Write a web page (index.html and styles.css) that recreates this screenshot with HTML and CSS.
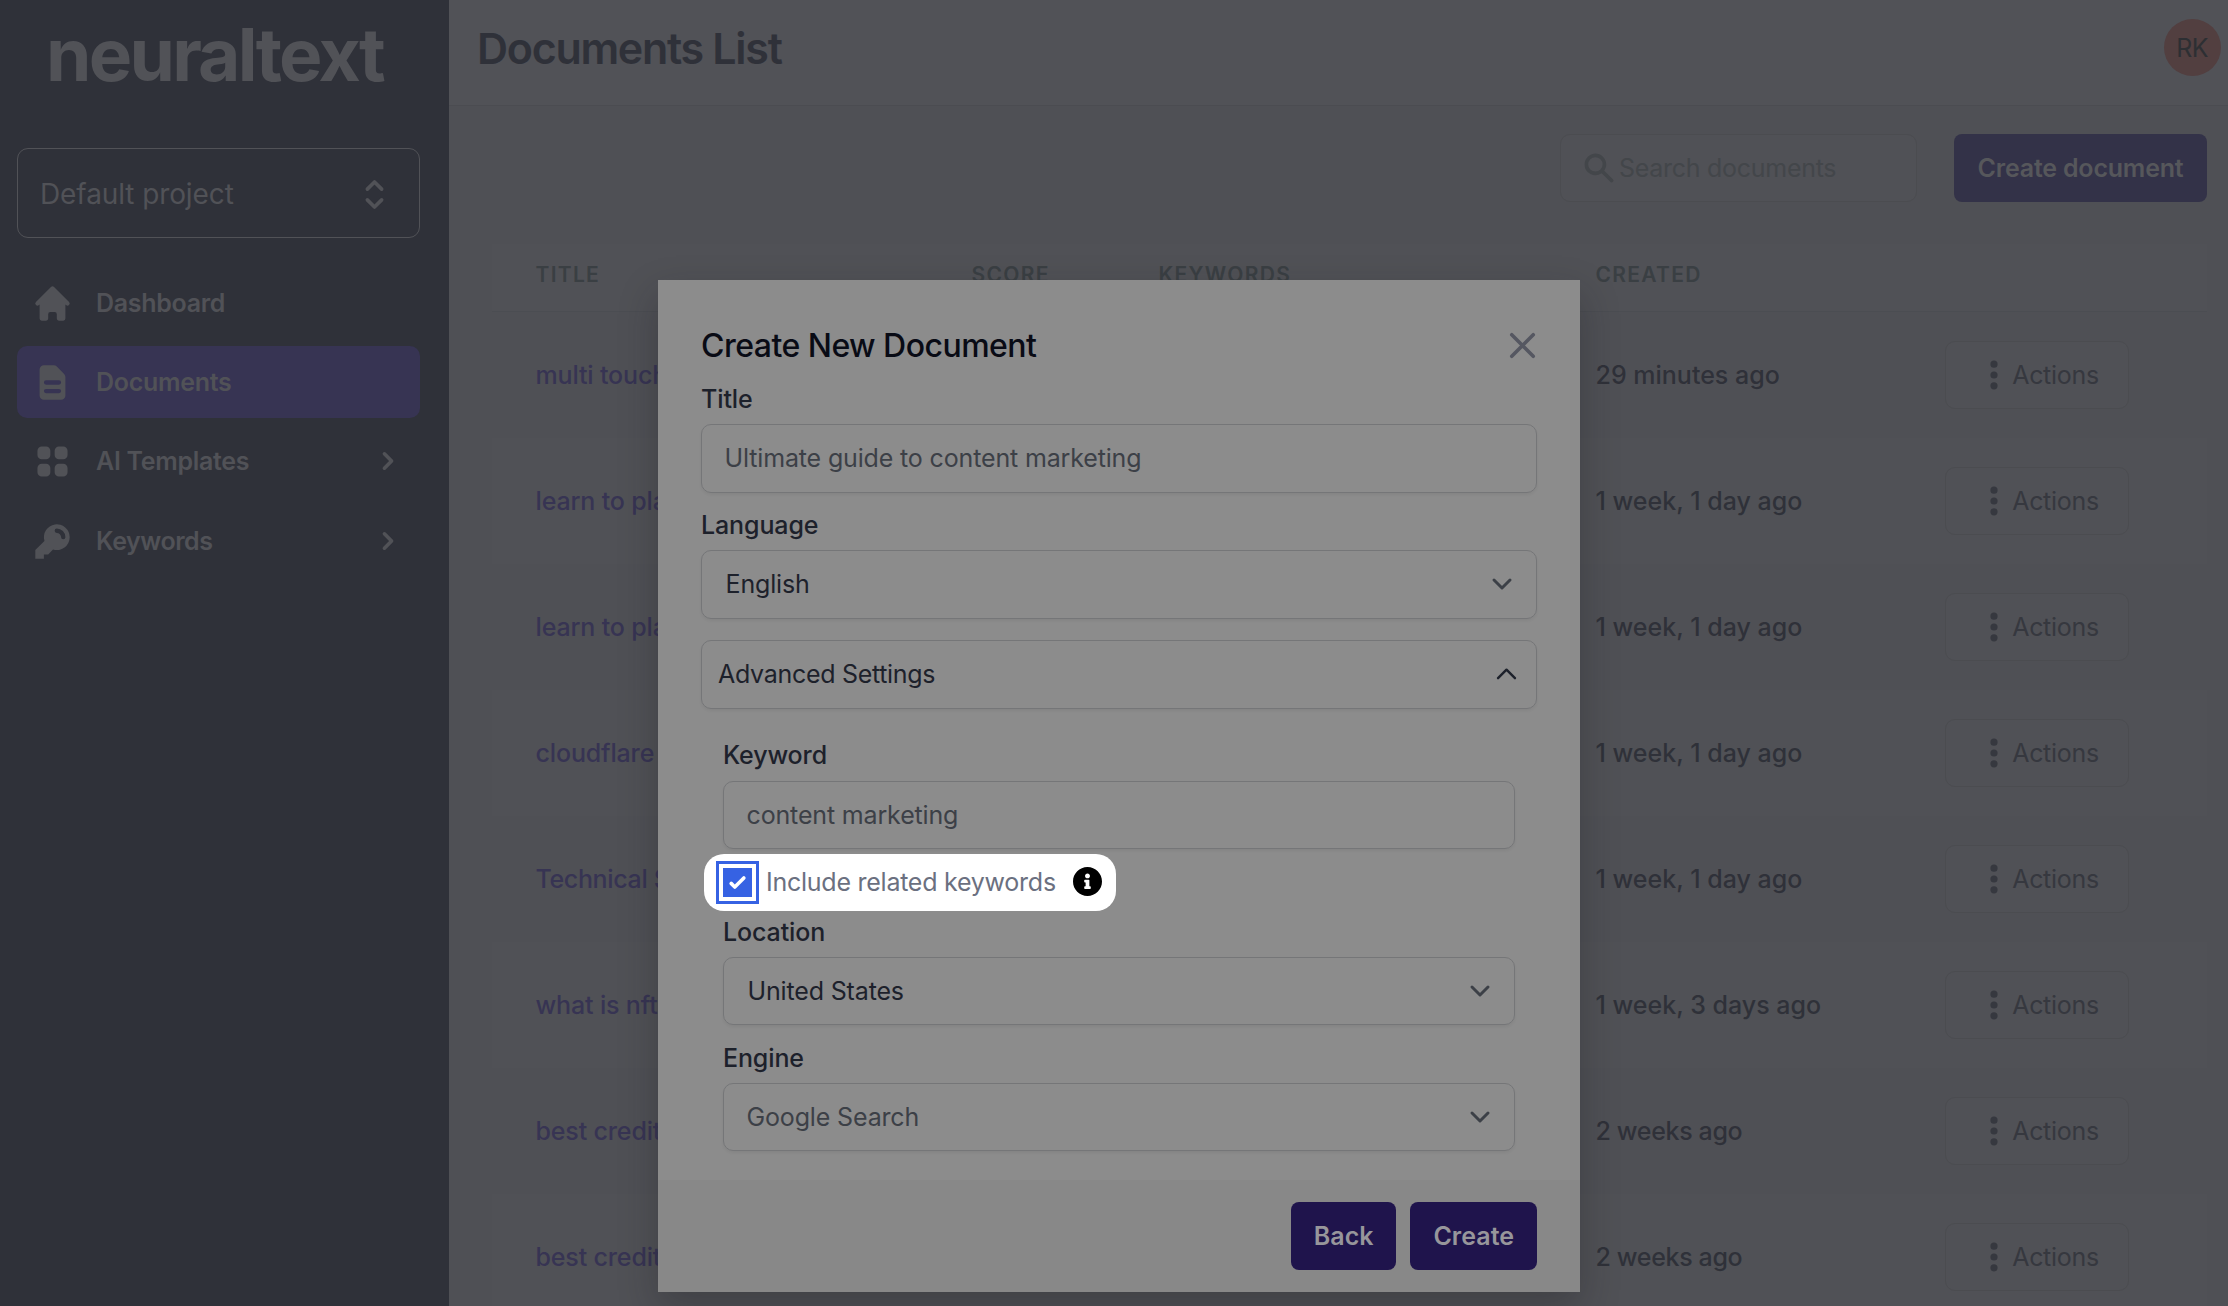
FILE: index.html
```html
<!DOCTYPE html>
<html lang="en">
<head>
<meta charset="utf-8">
<title>Documents List</title>
<link rel="stylesheet" href="styles.css">
</head>
<body>
<svg class="sprite" aria-hidden="true">
  <symbol id="chevron-right" viewBox="0 0 20 20"><path d="M7.293 14.707a1 1 0 010-1.414L10.586 10 7.293 6.707a1 1 0 011.414-1.414l4 4a1 1 0 010 1.414l-4 4a1 1 0 01-1.414 0z"/></symbol>
  <symbol id="dots" viewBox="0 0 20 20"><path d="M10 6a2 2 0 110-4 2 2 0 010 4zM10 12a2 2 0 110-4 2 2 0 010 4zM10 18a2 2 0 110-4 2 2 0 010 4z"/></symbol>
  <symbol id="chevron-down" viewBox="0 0 20 20"><path d="M6 8l4 4 4-4" fill="none" stroke="currentColor" stroke-width="1.5" stroke-linecap="round" stroke-linejoin="round"/></symbol>
</svg>
<div class="app">
  <aside class="sidebar">
    <div class="logo">neuraltext</div>
    <div class="project"><span>Default project</span>
      <svg class="icon-lg" viewBox="0 0 24 24" fill="none" stroke="currentColor" stroke-width="2" stroke-linecap="round" stroke-linejoin="round"><path d="M8 9l4-4 4 4m0 6l-4 4-4-4"/></svg>
    </div>
    <nav class="nav">
      <a class="nav-item"><svg class="icon-lg" viewBox="0 0 20 20"><path d="M10.707 2.293a1 1 0 00-1.414 0l-7 7a1 1 0 001.414 1.414L4 10.414V17a1 1 0 001 1h2a1 1 0 001-1v-2a1 1 0 011-1h2a1 1 0 011 1v2a1 1 0 001 1h2a1 1 0 001-1v-6.586l.293.293a1 1 0 001.414-1.414l-7-7z"/></svg><span>Dashboard</span></a>
      <a class="nav-item active"><svg class="icon-lg" viewBox="0 0 20 20"><path fill-rule="evenodd" d="M4 4a2 2 0 012-2h4.586A2 2 0 0112 2.586L15.414 6A2 2 0 0116 7.414V16a2 2 0 01-2 2H6a2 2 0 01-2-2V4zm2 6a1 1 0 011-1h6a1 1 0 110 2H7a1 1 0 01-1-1zm1 3a1 1 0 100 2h6a1 1 0 100-2H7z"/></svg><span>Documents</span></a>
      <a class="nav-item"><svg class="icon-lg" viewBox="0 0 20 20"><path d="M5 3a2 2 0 00-2 2v2a2 2 0 002 2h2a2 2 0 002-2V5a2 2 0 00-2-2H5zM5 11a2 2 0 00-2 2v2a2 2 0 002 2h2a2 2 0 002-2v-2a2 2 0 00-2-2H5zM11 5a2 2 0 012-2h2a2 2 0 012 2v2a2 2 0 01-2 2h-2a2 2 0 01-2-2V5zM11 13a2 2 0 012-2h2a2 2 0 012 2v2a2 2 0 01-2 2h-2a2 2 0 01-2-2v-2z"/></svg><span>AI Templates</span><svg class="icon more"><use href="#chevron-right"/></svg></a>
      <a class="nav-item keywords"><svg class="icon-lg" viewBox="0 0 20 20"><path fill-rule="evenodd" d="M18 8a6 6 0 01-7.743 5.743L10 14l-1 1-1 1H6v2H2v-4l4.257-4.257A6 6 0 1118 8zm-6-4a1 1 0 100 2 2 2 0 012 2 1 1 0 102 0 4 4 0 00-4-4z"/></svg><span>Keywords</span><svg class="icon more"><use href="#chevron-right"/></svg></a>
    </nav>
  </aside>
  <main class="main">
    <header class="topbar"><h1>Documents List</h1><div class="avatar">RK</div></header>
    <div class="toolbar">
      <div class="search"><svg class="icon" viewBox="0 0 20 20"><path fill-rule="evenodd" d="M8 4a4 4 0 100 8 4 4 0 000-8zM2 8a6 6 0 1110.89 3.476l4.817 4.817a1 1 0 01-1.414 1.414l-4.816-4.816A6 6 0 012 8z"/></svg><span>Search documents</span></div>
      <button class="create-doc">Create document</button>
    </div>
    <section class="table">
      <div class="row head"><span>TITLE</span><span>SCORE</span><span>KEYWORDS</span><span>CREATED</span></div>
      <div class="row"><a>multi touch</a><time>29 minutes ago</time><button class="actions"><svg class="icon"><use href="#dots"/></svg><span>Actions</span></button></div>
      <div class="row"><a>learn to pla</a><time>1 week, 1 day ago</time><button class="actions"><svg class="icon"><use href="#dots"/></svg><span>Actions</span></button></div>
      <div class="row"><a>learn to pla</a><time>1 week, 1 day ago</time><button class="actions"><svg class="icon"><use href="#dots"/></svg><span>Actions</span></button></div>
      <div class="row"><a>cloudflare</a><time>1 week, 1 day ago</time><button class="actions"><svg class="icon"><use href="#dots"/></svg><span>Actions</span></button></div>
      <div class="row"><a class="snug">Technical S</a><time>1 week, 1 day ago</time><button class="actions"><svg class="icon"><use href="#dots"/></svg><span>Actions</span></button></div>
      <div class="row"><a>what is nft</a><time>1 week, 3 days ago</time><button class="actions"><svg class="icon"><use href="#dots"/></svg><span>Actions</span></button></div>
      <div class="row"><a>best credit</a><time class="snug">2 weeks ago</time><button class="actions"><svg class="icon"><use href="#dots"/></svg><span>Actions</span></button></div>
      <div class="row"><a>best credit</a><time class="snug">2 weeks ago</time><button class="actions"><svg class="icon"><use href="#dots"/></svg><span>Actions</span></button></div>
    </section>
  </main>
</div>
<div class="modal" role="dialog">
  <div class="modal-body">
    <div class="modal-head"><h2>Create New Document</h2>
      <svg class="icon-lg" viewBox="0 0 24 24" fill="none" stroke="currentColor" stroke-width="2" stroke-linecap="round"><path d="M6 18L18 6M6 6l12 12"/></svg></div>
    <label>Title</label>
    <div class="field tall placeholder"><span>Ultimate guide to content marketing</span></div>
    <label>Language</label>
    <div class="field tall"><span>English</span><svg class="caret"><use href="#chevron-down"/></svg></div>
    <div class="field tall accordion"><span>Advanced Settings</span><svg class="caret-up" viewBox="0 0 24 24" fill="none" stroke="currentColor" stroke-width="2" stroke-linecap="round" stroke-linejoin="round"><path d="M5 15l7-7 7 7"/></svg></div>
    <div class="advanced">
      <label class="first">Keyword</label>
      <div class="field placeholder"><span>content marketing</span></div>
      <div class="related">
        <span class="checkbox"><svg viewBox="0 0 16 16"><path d="M12.207 4.793a1 1 0 010 1.414l-5 5a1 1 0 01-1.414 0l-2-2a1 1 0 011.414-1.414L6.5 9.086l4.293-4.293a1 1 0 011.414 0z"/></svg></span>
        <span class="related-text">Include related keywords</span>
        <svg class="info" viewBox="8 8 496 496"><path d="M256 8C119.043 8 8 119.083 8 256c0 136.997 111.043 248 248 248s248-111.003 248-248C504 119.083 392.957 8 256 8zm0 110c23.196 0 42 18.804 42 42s-18.804 42-42 42-42-18.804-42-42 18.804-42 42-42zm56 254c0 6.627-5.373 12-12 12h-88c-6.627 0-12-5.373-12-12v-24c0-6.627 5.373-12 12-12h12v-64h-12c-6.627 0-12-5.373-12-12v-24c0-6.627 5.373-12 12-12h64c6.627 0 12 5.373 12 12v100h12c6.627 0 12 5.373 12 12v24z"/></svg>
      </div>
      <label class="after-related">Location</label>
      <div class="field"><span>United States</span><svg class="caret"><use href="#chevron-down"/></svg></div>
      <label class="last">Engine</label>
      <div class="field placeholder"><span>Google Search</span><svg class="caret"><use href="#chevron-down"/></svg></div>
    </div>
  </div>
  <footer class="modal-foot"><button>Back</button><button>Create</button></footer>
</div>
</body>
</html>
```
FILE: styles.css
```css
* { box-sizing: border-box; }
body { margin: 0; width: 2228px; height: 1306px; overflow: hidden; position: relative; background: #4f5055; font: 400 25px/36px Inter, sans-serif; letter-spacing: -.2px; }
h1, h2 { margin: 0; }
svg { flex: none; fill: currentColor; }
svg[fill="none"] { fill: none; }
button { font: inherit; letter-spacing: inherit; border: 0; padding: 0; display: flex; align-items: center; justify-content: center; }
.sprite { position: absolute; width: 0; height: 0; }
.icon { width: 36px; height: 36px; }
.icon-lg { width: 43px; height: 43px; }

.app { display: flex; height: 1306px; }
.sidebar { width: 449px; flex: none; padding: 0 29px 0 17px; background: #2f3139; color: #515257; }
.logo { height: 148px; padding: 24px 0 0 29px; font-size: 73px; line-height: 62px; font-weight: 700; letter-spacing: -2.75px; }
.project { height: 90px; display: flex; align-items: center; justify-content: space-between; padding: 2px 23px 0 22px; border: 1px solid #515257; border-radius: 11px; font-size: 28px; letter-spacing: -.1px; }
.nav { display: flex; flex-direction: column; gap: 7px; padding-top: 29px; }
.nav-item { height: 72px; display: flex; align-items: center; padding: 0 14px; gap: 22px; border-radius: 10px; font-weight: 600; letter-spacing: -.3px; }
.nav-item.active { background: #373453; }
.nav-item.keywords { margin-top: 1px; letter-spacing: -.45px; }
.more { margin-left: auto; }

.main { flex: 1; display: flex; flex-direction: column; }
.topbar { height: 106px; flex: none; display: flex; align-items: flex-start; justify-content: space-between; padding: 19px 7px 0 28px; background: #515257; border-bottom: 1px solid #4b4c51; }
.topbar h1 { font-size: 43px; line-height: 58px; font-weight: 600; letter-spacing: -1.3px; color: #2f3139; }
.avatar { width: 57px; height: 57px; border-radius: 50%; display: flex; align-items: center; justify-content: center; background: #523f40; color: #2d2f33; letter-spacing: -.8px; padding-right: 1px; }
.toolbar { display: flex; justify-content: flex-end; gap: 37px; padding: 28px 21px 0 0; }
.search { width: 357px; height: 68px; display: flex; align-items: center; gap: 2px; padding-left: 20px; border: 1px solid #4b4c50; border-radius: 10px; background: #505156; color: #43464a; letter-spacing: -.28px; }
.create-doc { width: 253px; height: 68px; border-radius: 8px; background: #333248; color: #56575b; font-weight: 600; }
.table { margin: 42px 21px 0 43px; background: #4f5055; }
.row { height: 126px; display: grid; grid-template-columns: 1060px 349px 184px; align-items: center; padding-left: 43.5px; font-weight: 500; color: #2f3139; background: #505156; letter-spacing: 0; }
.row:nth-child(even) { background: #4f5055; }
.row a { color: #373453; letter-spacing: -.15px; }
.row .snug { letter-spacing: -.35px; }
.row.head { height: 68px; grid-template-columns: 436px 187px 437px 1fr; background: #505156; border-bottom: 1px solid #4b4d52; font-size: 21px; font-weight: 600; letter-spacing: 1.3px; color: #3a3f43; padding-bottom: 5px; }
.actions { width: 184px; height: 68px; padding-left: 2px; border: 1px solid #4b4c50; border-radius: 10px; background: #505156; color: #36383f; font-weight: 400; letter-spacing: -.3px; }

.modal { position: absolute; left: 658px; top: 280px; width: 922px; height: 1012px; display: flex; flex-direction: column; background: #8c8c8c; color: #1d212b; box-shadow: 0 16px 36px rgba(25, 25, 30, .3); }
.modal-body { height: 900px; padding: 44px 43px 0; display: flex; flex-direction: column; }
.modal-head { height: 43px; display: flex; align-items: center; justify-content: space-between; margin-right: -7px; color: #555761; }
.modal h2 { font-size: 32px; font-weight: 500; letter-spacing: -.53px; color: #090b15; }
label { display: block; height: 57px; padding-top: 14px; font-weight: 500; letter-spacing: -.12px; }
.field { height: 68px; flex: none; display: flex; align-items: center; justify-content: space-between; padding: 0 14px 0 23.5px; border: 1px solid #757678; border-radius: 10px; box-shadow: 0 2px 3px rgba(0, 0, 0, .05); letter-spacing: -.15px; }
.field.tall { height: 69px; padding-bottom: 1px; }
.field.placeholder { padding-left: 22.5px; color: #3c4047; }
.caret { width: 40px; height: 40px; color: #3c4047; }
.accordion { margin-top: 21px; padding: 0 15px 0 16px; letter-spacing: -.3px; }
.caret-up { width: 29px; height: 29px; }
.advanced { padding: 15px 22px 0; }
.advanced .first { padding-top: 13px; }
.related { width: 412px; height: 57px; margin: 5px 0 0 -19px; padding: 0 0 1px 12px; display: flex; align-items: center; background: #fff; border-radius: 20px; color: #6b7080; }
.checkbox { width: 43px; height: 43px; padding: 4px; border: 3px solid #3662e3; background: #fff; display: flex; }
.checkbox svg { width: 29px; height: 29px; background: #3662e3; color: #fff; }
.related-text { width: 307px; margin: -1px 0 0 7px; letter-spacing: -.25px; }
.info { width: 29px; height: 29px; margin-top: -2px; color: #000; }
.advanced .after-related { height: 46px; padding-top: 3px; }
.advanced .last { height: 58px; padding-top: 15px; }
.modal-foot { height: 112px; display: flex; align-items: center; justify-content: flex-end; gap: 14px; padding: 0 43px; background: #888; }
.modal-foot button { height: 68px; border-radius: 8px; background: #1f144c; color: #97969b; font-weight: 600; padding: 0 23px; letter-spacing: 0; }
```
